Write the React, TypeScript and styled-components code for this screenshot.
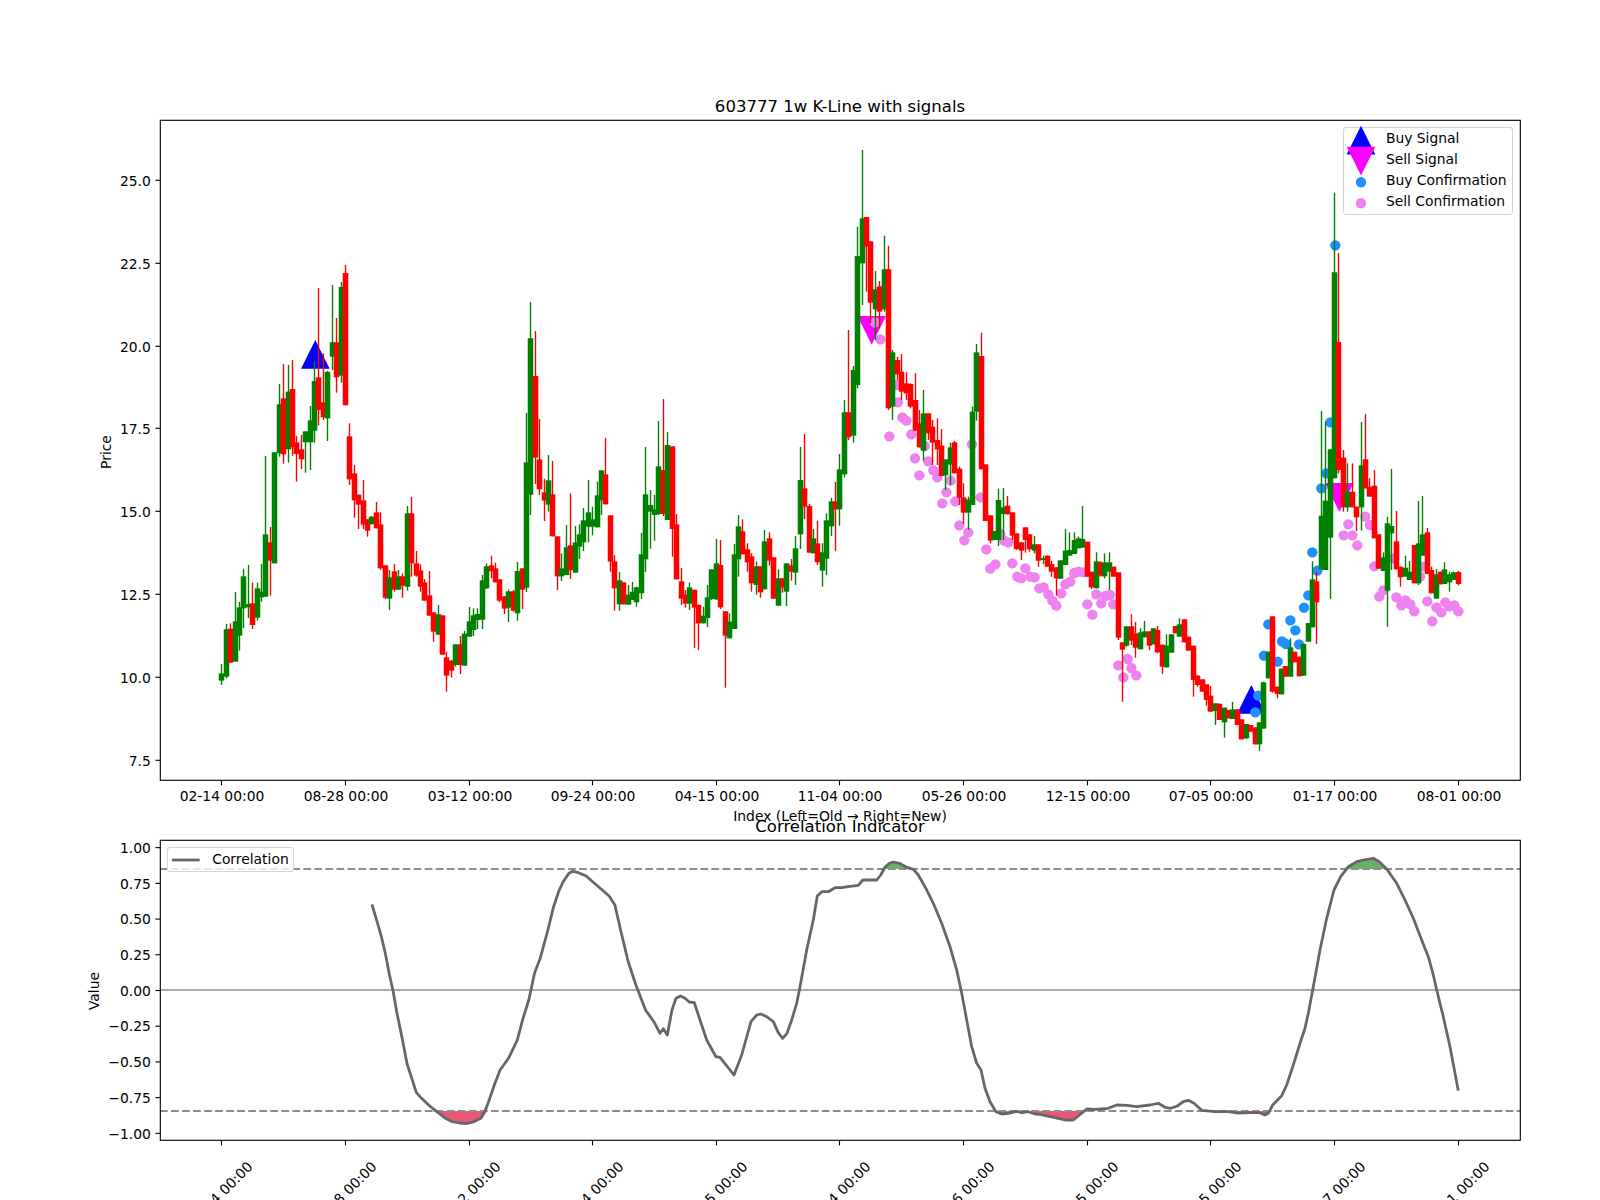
import styled, { createGlobalStyle } from 'styled-components';

type Candle = ['g' | 'r', number, number, number, number];
type Point = [number, number];

// colour, body top, body bottom, wick top, wick bottom
// y is in 3x units measured from y=390 of the figure
const candles: Candle[] = [
  ['g',850,872,822,885],['g',718,860,702,865],['r',716,818,700,818],['g',694,815,606,815],['g',652,737,636,782],
  ['g',559,655,537,714],['g',642,652,525,684],['r',640,705,578,717],['g',595,683,578,692],['g',605,622,522,635],
  ['g',433,620,198,620],['r',457,512,411,617],['g',187,520,187,520],['g',43,190,-18,200],['r',25,193,-78,221],
  ['g',5,178,-75,218],['r',-3,172,-90,197],['r',157,192,138,275],['r',178,208,135,237],['g',124,157,124,248],
  ['g',91,157,48,240],['g',-27,122,-87,158],['r',-38,60,-306,107],['r',37,82,-110,90],['g',-54,85,-57,153],
  ['g',-143,-100,-315,-60],['r',-143,-38,-216,8],['g',-309,-43,-324,-22],['r',-351,46,-375,46],['r',139,268,100,285],
  ['r',250,331,225,383],['r',314,344,314,417],['r',331,404,270,417],['r',388,422,388,440],['g',380,402,378,404],
  ['r',367,415,336,415],['r',403,535,367,540],['r',526,623,526,627],['g',562,626,540,660],['r',544,599,522,605],
  ['g',559,599,540,600],['r',559,587,550,623],['g',370,590,348,602],['r',370,520,321,560],['r',520,557,483,560],
  ['r',541,590,523,605],['r',577,632,567,632],['r',616,677,543,677],['r',667,725,667,755],['g',673,734,645,735],
  ['r',676,794,676,794],['r',802,857,786,905],['r',812,842,810,863],['g',763,825,763,830],['r',763,825,738,852],
  ['g',731,827,723,827],['g',694,740,651,740],['g',676,720,655,738],['g',672,690,655,717],['g',571,689,555,717],
  ['g',529,595,520,597],['r',526,544,497,565],['r',535,577,518,577],['r',568,632,568,637],['r',619,656,619,672],
  ['g',604,653,598,696],['r',604,662,600,665],['g',543,670,516,692],['r',535,599,535,657],['g',217,593,69,606],
  ['g',-155,314,-264,375],['r',-42,203,-177,282],['r',208,298,87,315],['r',307,332,266,393],['g',271,344,195,365],
  ['r',313,439,213,439],['r',439,559,439,600],['g',535,559,490,573],['g',472,555,405,555],['r',466,540,310,567],
  ['g',457,548,408,548],['g',433,470,403,507],['g',391,457,354,483],['g',367,410,270,457],['g',388,410,350,436],
  ['g',316,412,275,412],['g',241,331,241,375],['r',253,343,144,343],['r',376,515,376,545],['r',514,595,495,662],
  ['g',571,643,546,662],['r',577,643,577,643],['g',614,644,585,644],['g',605,630,576,630],['g',592,637,590,650],
  ['g',493,610,429,627],['g',313,508,171,546],['g',345,365,300,476],['g',358,375,315,452],['g',229,372,93,375],
  ['r',240,372,27,378],['g',165,390,126,390],['r',169,417,169,500],['r',403,568,372,568],['r',574,626,534,645],
  ['r',614,641,600,653],['g',592,641,578,660],['r',599,653,599,774],['r',645,700,643,780],['g',677,700,650,700],
  ['g',622,684,585,711],['g',538,627,538,630],['g',520,628,447,630],['r',525,652,450,657],['r',664,737,664,893],
  ['g',695,745,670,745],['g',493,717,462,717],['g',409,508,375,560],['r',424,493,388,493],['r',478,517,460,545],
  ['r',499,580,490,605],['g',529,585,514,614],['r',529,607,529,623],['g',454,598,420,598],['r',445,512,427,527],
  ['r',502,626,502,626],['g',565,647,538,647],['r',565,593,565,608],['g',520,605,520,648],['r',526,545,507,572],
  ['g',475,548,438,585],['g',270,433,171,477],['r',295,350,132,387],['r',348,488,342,488],['g',445,490,417,490],
  ['r',460,517,392,525],['g',487,542,460,590],['g',391,506,370,555],['g',334,409,324,438],['r',334,358,276,483],
  ['g',238,358,192,407],['g',67,253,30,262],['r',67,142,-180,150],['g',-60,137,-72,158],['g',-402,-15,-490,-5],
  ['g',-515,-380,-720,-255],['r',-519,-430,-519,-295],['r',-446,-262,-446,-200],['g',-302,-242,-357,-150],['r',-311,-235,-327,-185],
  ['g',-362,-242,-463,-235],['r',-362,55,-433,60],['g',-113,50,-120,90],['r',-90,-47,-100,-30],['r',-55,5,-108,30],
  ['r',-20,10,-53,30],['r',-18,50,-20,55],['r',30,122,-50,122],['r',100,172,60,172],['g',70,182,0,212],
  ['r',70,130,70,150],['r',110,158,90,225],['r',150,178,85,225],['r',167,258,117,258],['g',208,256,208,300],
  ['g',172,224,158,285],['r',157,250,153,250],['r',236,323,230,345],['r',322,368,280,402],['g',328,368,320,420],
  ['g',65,345,50,345],['g',-113,65,-138,92],['r',-102,238,-172,238],['r',223,393,223,393],['r',376,452,376,460],
  ['g',423,450,423,450],['g',330,450,296,468],['g',352,372,294,450],['r',347,373,318,373],['r',367,437,367,450],
  ['r',430,477,430,480],['r',457,482,457,510],['r',412,450,412,488],['r',433,478,433,485],['g',463,482,438,490],
  ['r',463,512,463,530],['g',505,510,497,522],['r',497,530,497,530],['r',522,545,512,560],['r',532,565,532,617],
  ['g',511,566,511,566],['g',482,525,417,525],['g',480,497,427,497],['g',450,492,427,492],['g',445,475,440,475],
  ['g',447,473,348,473],['r',455,560,455,560],['r',545,592,545,597],['g',514,595,487,595],['r',517,557,514,560],
  ['g',517,559,490,565],['g',517,545,487,600],['r',530,560,530,560],['r',547,743,547,750],['r',757,779,757,935],
  ['g',709,767,709,770],['r',709,752,673,765],['r',730,773,696,803],['g',727,778,715,778],['g',724,742,693,742],
  ['r',724,767,724,780],['g',715,763,715,763],['r',720,787,708,790],['r',764,830,764,852],['g',767,832,733,833],
  ['g',733,788,733,788],['r',708,730,708,730],['g',703,740,685,740],['r',688,757,688,757],['r',740,782,740,782],
  ['r',767,870,767,920],['r',857,885,855,890],['r',868,905,868,905],['r',883,930,883,947],['r',917,965,888,965],
  ['g',940,963,940,1005],['r',941,990,941,990],['g',953,997,953,1043],['r',960,985,960,985],['g',958,987,936,987],
  ['r',958,1005,958,1005],['r',988,1048,988,1048],['g',1002,1045,1002,1048],['r',1005,1025,1005,1025],['r',1012,1063,1012,1063],
  ['g',997,1063,997,1082],['g',877,1016,875,1016],['g',785,865,785,865],['r',679,905,679,908],['r',890,912,890,925],
  ['g',836,913,836,913],['r',828,860,828,860],['g',772,860,745,860],['r',785,817,785,817],['r',800,859,800,859],
  ['g',762,857,762,857],['g',699,755,699,755],['g',568,712,514,712],['r',574,637,545,762],['g',377,538,63,540],
  ['g',332,540,95,540],['g',178,443,178,627],['g',-353,265,-592,265],['r',-144,240,-411,250],['r',203,352,180,365],
  ['g',305,352,220,365],['r',305,352,220,352],['r',350,382,350,423],['g',226,352,96,422],['r',208,295,72,295],
  ['r',290,320,265,320],['r',287,445,240,445],['r',433,536,433,536],['g',502,543,487,543],['g',400,602,380,710],
  ['g',408,430,237,540],['r',454,538,363,538],['r',530,562,530,590],['g',533,560,497,560],['g',545,570,513,570],
  ['r',465,580,465,580],['g',460,580,333,585],['g',433,497,318,497],['r',427,552,414,552],['r',540,610,530,610],
  ['g',553,626,537,626],['r',545,583,545,583],['g',538,582,517,582],['g',553,577,545,605],['g',547,570,545,570],
  ['r',546,582,543,586],
];

const crop = (ox: number, oy: number, sx: number, pts: Point[]): Point[] =>
  pts.map(([x, y]) => [ox + x / sx, oy + y / 3]);

const buyDots = crop(1100, 390, 3, [
  [505,703],[492,797],[466,967],[475,917],[533,815],[546,754],[558,762],[571,691],[586,721],[597,763],[612,653],
  [625,616],[637,487],[652,542],[664,295],[679,250],[691,97],[706,-434],
]);

const sellDots = [
  ...crop(650, 390, 3, [
    [718,139],[744,37],[757,82],[769,92],[784,133],[795,205],[808,256],[824,168],[835,214],[850,241],[862,262],
    [877,340],[889,307],[902,272],[916,334],[928,406],[955,427],[943,451],[966,163],[992,322],[1009,478],[1021,536],
    [1036,523],[1051,432],[1063,452],[1075,457],[1087,520],[1102,560],[1114,565],[1126,535],[1141,560],[1154,562],
    [1168,595],[1181,592],[1195,613],[1207,632],[1219,647],[1234,610],[1246,583],[1261,575],[1273,549],[1285,545],
    [1300,547],[1312,643],[1327,674],[1339,613],[1354,640],[1366,618],[1379,615],[1390,643],[1405,826],[1420,862],
    [1433,807],[1444,834],[1459,856],[691,-152],[675,-203],[740,-15],
  ]),
  ...crop(1100, 390, 3, [
    [796,380],[810,405],[745,403],[731,436],[757,436],[772,466],[823,529],[838,620],[850,601],[880,505],[889,622],
    [904,646],[916,631],[931,643],[943,664],[982,634],[997,694],[1009,652],[1024,667],[1036,637],[1048,649],
    [1063,646],[1075,664],[960,560],[970,530],
  ]),
];

const corrLine: Point[] = [
  ...crop(60, 790, 2.6133, [
    [815,343],[830,400],[840,440],[850,490],[860,550],[870,600],[880,665],[895,750],[907,822],[918,860],[931,907],
    [945,925],[965,947],[985,965],[1005,983],[1025,995],[1045,999],[1062,1001],[1080,996],[1100,985],[1110,965],
    [1120,935],[1135,885],[1150,840],[1172,805],[1195,750],[1210,685],[1225,630],[1240,550],[1255,505],[1275,420],
    [1290,350],[1303,305],[1315,275],[1330,250],[1340,244],[1355,248],[1375,258],[1395,278],[1420,303],[1435,318],
    [1450,345],[1465,420],[1485,515],[1505,585],[1530,660],[1552,695],[1568,730],
  ]),
  ...crop(650, 790, 3, [
    [40,716],[52,735],[66,660],[78,625],[92,618],[105,625],[118,636],[133,638],[150,690],[170,750],[198,800],[210,802],
    [252,855],[275,795],[303,695],[320,675],[332,672],[350,680],[370,695],[385,728],[398,745],[411,730],[425,690],
    [440,640],[450,590],[470,480],[490,390],[502,318],[515,305],[535,305],[555,293],[575,293],[600,289],[625,286],
    [638,270],[680,270],[692,255],[705,232],[718,220],[730,216],[748,220],[770,232],[790,238],[805,255],[825,290],
    [850,340],[875,400],[900,470],[920,540],[935,610],[950,690],[965,770],[980,820],[993,840],[1005,895],[1020,935],
    [1038,965],[1055,972],[1075,970],[1100,964],[1115,968],[1135,965],[1155,972],[1170,973],[1200,980],[1225,985],
    [1245,990],[1270,990],[1285,978],[1310,957],[1335,958],[1375,955],[1400,945],[1430,946],[1460,950],
  ]),
  ...crop(1100, 790, 3, [
    [150,945],[175,940],[195,952],[212,955],[232,948],[250,935],[265,931],[282,940],[305,961],[345,965],[385,965],
    [410,969],[450,968],[478,968],[495,975],[505,970],[518,945],[545,917],[560,885],[580,825],[600,760],[615,715],
    [625,670],[640,590],[660,480],[680,385],[702,300],[722,260],[745,230],[770,215],[790,210],[820,205],[838,215],
    [860,237],[890,280],[915,330],[940,385],[965,450],[985,500],[1000,555],[1010,600],[1030,680],[1050,770],[1075,902],
  ]),
];

const dates = ['02-14', '08-28', '03-12', '09-24', '04-15', '11-04', '05-26', '12-15', '07-05', '01-17', '08-01'];

const indexX = (i: number) => Math.floor(221.8 + 4.4156 * i) + 0.5;
const cropY = (v: number) => 390 + v / 3;
const priceY = (p: number) => Math.round(677.1 - (p - 10) * 33.16) + 0.3;
const valueY = (v: number) => 990.5 - v * 142.85;
const toPoints = (pts: Point[]) => pts.map(([x, y]) => `${x.toFixed(1)},${y.toFixed(1)}`).join(' ');

const GlobalStyle = createGlobalStyle`
  html, body {
    margin: 0;
    background: #fff;
  }
`;

const Figure = styled.div`
  display: flex;
  flex-direction: column;
  width: 1600px;
  height: 1200px;
  overflow: hidden;
  background: #fff;
  font-family: 'DejaVu Sans', sans-serif;
`;

const Panel = styled.div<{ $height: number }>`
  position: relative;
  flex: none;
  height: ${(p) => p.$height}px;
`;

const Plot = styled.svg`
  display: block;
  overflow: visible;
`;

const Label = styled.text<{ $size?: number }>`
  font-family: 'DejaVu Sans', sans-serif;
  font-size: ${(p) => p.$size ?? 13.89}px;
  fill: #000;
`;

const Frame = styled.rect`
  fill: none;
  stroke: #000;
  stroke-width: 1.11px;
`;

const Tick = styled.line`
  stroke: #000;
  stroke-width: 1.11px;
`;

const Wick = styled.line<{ $up: boolean }>`
  stroke: ${(p) => (p.$up ? '#008000' : '#ff0000')};
  stroke-width: 1.39px;
`;

const Body = styled.line<{ $up: boolean }>`
  stroke: ${(p) => (p.$up ? '#008000' : '#ff0000')};
  stroke-width: 5.55px;
`;

const Dot = styled.circle<{ $color: string }>`
  fill: ${(p) => p.$color};
`;

const Level = styled.line<{ $solid?: boolean }>`
  stroke: ${(p) => (p.$solid ? '#a9a9a9' : '#8c8c8c')};
  stroke-width: 2.08px;
  stroke-dasharray: ${(p) => (p.$solid ? 'none' : '7.7 3.33')};
`;

const CorrPath = styled.polyline`
  fill: none;
  stroke: #666;
  stroke-width: 2.78px;
  stroke-linejoin: round;
`;

const Area = styled.polygon<{ $color: string; $opacity: number }>`
  fill: ${(p) => p.$color};
  opacity: ${(p) => p.$opacity};
`;

const Legend = styled.div<{ $top: number; $left: number; $width: number; $height: number; $lift?: number }>`
  position: absolute;
  top: ${(p) => p.$top}px;
  left: ${(p) => p.$left}px;
  width: ${(p) => p.$width}px;
  height: ${(p) => p.$height}px;
  box-sizing: border-box;
  display: flex;
  flex-direction: column;
  justify-content: center;
  padding-bottom: ${(p) => p.$lift ?? 0}px;
  border: 1.1px solid #d4d4d4;
  border-radius: 3px;
  background: rgba(255, 255, 255, 0.8);
`;

const LegendRow = styled.div<{ $gutter: number }>`
  display: grid;
  grid-template-columns: ${(p) => p.$gutter}px 1fr;
  align-items: center;
  height: 20.9px;
  font-size: 13.89px;
  line-height: 20.9px;
  color: #000;
  white-space: nowrap;
`;

const Swatch = styled.svg`
  display: block;
  justify-self: start;
  margin-left: 0.6px;
  width: 34px;
  height: 20px;
  overflow: visible;
`;

const up = (cx: number, tip: number) => `${cx},${tip} ${cx + 14.3},${tip + 28.8} ${cx - 14.3},${tip + 28.8}`;
const down = (cx: number, top: number) => `${cx - 14.3},${top} ${cx + 14.3},${top} ${cx},${top + 28.8}`;

function PriceChart() {
  return (
    <Plot width={1600} height={830} viewBox="0 0 1600 830">
      <polygon points={up(315.3, 340)} fill="#0000ff" />
      <polygon points={up(1251.3, 685)} fill="#0000ff" />
      <polygon points={down(871.7, 316)} fill="#ff00ff" />
      <polygon points={down(1339.3, 483)} fill="#ff00ff" />

      {buyDots.map(([x, y], i) => (
        <Dot key={i} cx={x} cy={y} r={5.2} $color="#1e90ff" />
      ))}
      {sellDots.map(([x, y], i) => (
        <Dot key={i} cx={x} cy={y} r={5.2} $color="#ee82ee" />
      ))}

      {candles.map(([color, top, bottom, high, low], i) => {
        const x = indexX(i);
        const isUp = color === 'g';
        return (
          <g key={i}>
            <Wick $up={isUp} x1={x} x2={x} y1={cropY(high)} y2={cropY(low)} />
            <Body $up={isUp} x1={x} x2={x} y1={cropY(top)} y2={cropY(bottom)} />
          </g>
        );
      })}

      <Frame x={160.3} y={120.3} width={1360} height={660} />

      {[7.5, 10, 12.5, 15, 17.5, 20, 22.5, 25].map((p) => (
        <g key={p}>
          <Tick x1={155.4} x2={160} y1={priceY(p)} y2={priceY(p)} />
          <Label x={150.8} y={priceY(p) + 5.2} textAnchor="end">
            {p.toFixed(1)}
          </Label>
        </g>
      ))}

      {dates.map((d, i) => {
        const x = indexX(i * 28);
        return (
          <g key={d}>
            <Tick x1={x} x2={x} y1={780.5} y2={785.4} />
            <Label x={x + 0.5} y={801.3} textAnchor="middle">{`${d} 00:00`}</Label>
          </g>
        );
      })}

      <Label x={840} y={112} textAnchor="middle" $size={16.55}>
        603777 1w K-Line with signals
      </Label>
      <Label x={840} y={820.5} textAnchor="middle">
        Index (Left=Old → Right=New)
      </Label>
      <Label x={111} y={452} textAnchor="middle" transform="rotate(-90 111 452)">
        Price
      </Label>
    </Plot>
  );
}

function CorrelationChart() {
  const high = 869;
  const low = 1111;
  const above = corrLine.map(([x, y]): Point => [x, Math.min(y, high)]);
  const below = corrLine.map(([x, y]): Point => [x, Math.max(y, low)]);
  const x0 = corrLine[0][0];
  const x1 = corrLine[corrLine.length - 1][0];

  return (
    <Plot width={1600} height={370} viewBox="0 830 1600 370">
      <Area points={`${x0},${high} ${toPoints(above)} ${x1},${high}`} $color="#008000" $opacity={0.6} />
      <Area points={`${x0},${low} ${toPoints(below)} ${x1},${low}`} $color="#dc143c" $opacity={0.7} />

      <Level x1={160} x2={1520} y1={high} y2={high} />
      <Level x1={160} x2={1520} y1={low} y2={low} />
      <Level $solid x1={160} x2={1520} y1={990} y2={990} />
      <CorrPath points={toPoints(corrLine)} />

      <Frame x={160.3} y={840.3} width={1360} height={300} />

      {[1, 0.75, 0.5, 0.25, 0, -0.25, -0.5, -0.75, -1].map((v) => (
        <g key={v}>
          <Tick x1={155.4} x2={160} y1={valueY(v)} y2={valueY(v)} />
          <Label x={150.8} y={valueY(v) + 5.2} textAnchor="end">
            {v.toFixed(2).replace('-', '\u2212')}
          </Label>
        </g>
      ))}

      {dates.map((d, i) => {
        const x = indexX(i * 28);
        return (
          <g key={d}>
            <Tick x1={x} x2={x} y1={1140.5} y2={1145.4} />
            <Label
              x={x - 1.5}
              y={1194}
              textAnchor="middle"
              dominantBaseline="central"
              transform={`rotate(-45 ${x - 1.5} 1194)`}
            >{`${d} 00:00`}</Label>
          </g>
        );
      })}

      <Label x={840} y={831.7} textAnchor="middle" $size={16.55}>
        Correlation Indicator
      </Label>
      <Label x={98.5} y={991} textAnchor="middle" transform="rotate(-90 98.5 991)">
        Value
      </Label>
    </Plot>
  );
}

export default function App() {
  return (
    <Figure>
      <GlobalStyle />
      <Panel $height={830}>
        <PriceChart />
        <Legend $top={127.3} $left={1342.7} $width={170.6} $height={88} $lift={3.3}>
          <LegendRow $gutter={42.2}>
            <Swatch viewBox="0 0 34 20">
              <polygon points={up(17, -2.3)} fill="#0000ff" />
            </Swatch>
            Buy Signal
          </LegendRow>
          <LegendRow $gutter={42.2}>
            <Swatch viewBox="0 0 34 20">
              <polygon points={down(17, -2.3)} fill="#ff00ff" />
            </Swatch>
            Sell Signal
          </LegendRow>
          <LegendRow $gutter={42.2}>
            <Swatch viewBox="0 0 34 20">
              <circle cx={17} cy={12.3} r={5.2} fill="#1e90ff" />
            </Swatch>
            Buy Confirmation
          </LegendRow>
          <LegendRow $gutter={42.2}>
            <Swatch viewBox="0 0 34 20">
              <circle cx={17} cy={12.3} r={5.2} fill="#ee82ee" />
            </Swatch>
            Sell Confirmation
          </LegendRow>
        </Legend>
      </Panel>
      <Panel $height={370}>
        <CorrelationChart />
        <Legend $top={17.3} $left={167.4} $width={126.8} $height={24.7}>
          <LegendRow $gutter={43.8}>
            <Swatch viewBox="0 0 34 20">
              <line x1={2.9} x2={30.7} y1={10} y2={10} stroke="#666" strokeWidth={2.78} />
            </Swatch>
            Correlation
          </LegendRow>
        </Legend>
      </Panel>
    </Figure>
  );
}
